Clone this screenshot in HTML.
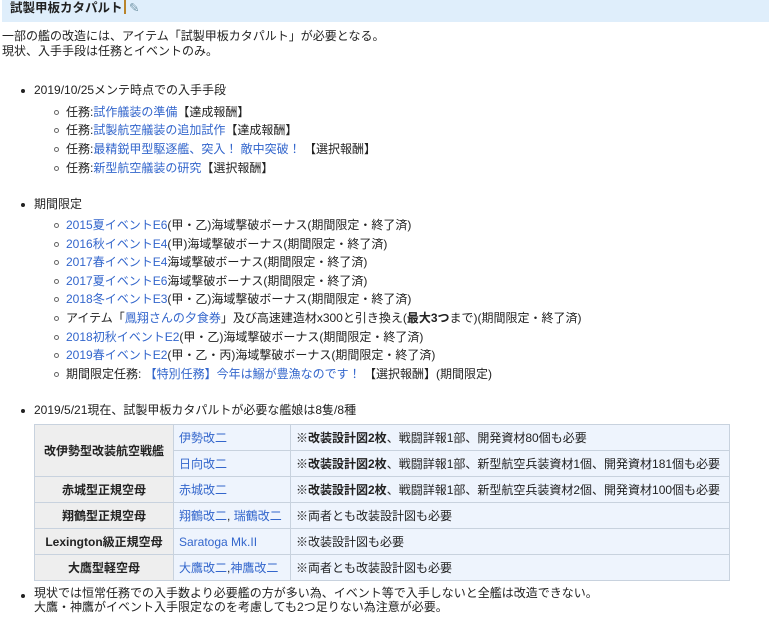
<!DOCTYPE html>
<html><head><meta charset="utf-8"><style>
body{margin:0;width:769px;height:617px;overflow:hidden;background:#fff;font-family:"Liberation Sans","Noto Sans CJK JP",sans-serif;font-size:12px;color:#222;}
.h{position:absolute;left:2px;top:0;width:767px;height:22px;background:#dfeefb;font-weight:bold;font-size:12.5px;line-height:16px;padding-left:8px;box-sizing:border-box;}
.h .bar{display:inline-block;width:2px;height:14px;background:#b8842c;vertical-align:-2px;margin-left:1px}
a{color:#3366cc;text-decoration:none}
.p{position:absolute;left:2px;top:29px;line-height:15px}
.l1{position:absolute;left:34px;line-height:18.7px}
.l1:before{content:"";position:absolute;left:-13px;top:8px;width:4px;height:4px;border-radius:50%;background:#222}
.l2{position:absolute;left:66px;line-height:18.7px}
.l2:before{content:"";position:absolute;left:-12px;top:7px;width:3px;height:3px;border-radius:50%;border:1px solid #666}
table{position:absolute;left:34px;top:424px;border-collapse:collapse;width:696px}
td{border:1px solid #c8d2de;height:25px;padding:0 5px;line-height:14px}
td.t{background:#eee;font-weight:bold;text-align:center;width:128px}
td.n{background:#eef4fd;width:106px}
td.d{background:#eef4fd}
b{font-weight:bold}
</style></head><body>
<div class="h">試製甲板カタパルト<span class="bar"></span> <span style="color:#79a;font-weight:normal">✎</span></div>
<div class="p">一部の艦の改造には、アイテム「試製甲板カタパルト」が必要となる。<br>現状、入手手段は任務とイベントのみ。</div>

<div class="l1" style="top:81px">2019/10/25メンテ時点での入手手段</div>
<div class="l2" style="top:103px">任務:<a>試作艤装の準備</a>【達成報酬】</div>
<div class="l2" style="top:121px">任務:<a>試製航空艤装の追加試作</a>【達成報酬】</div>
<div class="l2" style="top:140px">任務:<a>最精鋭甲型駆逐艦、突入！ 敵中突破！</a> 【選択報酬】</div>
<div class="l2" style="top:159px">任務:<a>新型航空艤装の研究</a>【選択報酬】</div>

<div class="l1" style="top:195px">期間限定</div>
<div class="l2" style="top:216px"><a>2015夏イベントE6</a>(甲・乙)海域撃破ボーナス(期間限定・終了済)</div>
<div class="l2" style="top:235px"><a>2016秋イベントE4</a>(甲)海域撃破ボーナス(期間限定・終了済)</div>
<div class="l2" style="top:253px"><a>2017春イベントE4</a>海域撃破ボーナス(期間限定・終了済)</div>
<div class="l2" style="top:272px"><a>2017夏イベントE6</a>海域撃破ボーナス(期間限定・終了済)</div>
<div class="l2" style="top:290px"><a>2018冬イベントE3</a>(甲・乙)海域撃破ボーナス(期間限定・終了済)</div>
<div class="l2" style="top:309px">アイテム「<a>鳳翔さんの夕食券</a>」及び高速建造材x300と引き換え(<b>最大3つ</b>まで)(期間限定・終了済)</div>
<div class="l2" style="top:328px"><a>2018初秋イベントE2</a>(甲・乙)海域撃破ボーナス(期間限定・終了済)</div>
<div class="l2" style="top:346px"><a>2019春イベントE2</a>(甲・乙・丙)海域撃破ボーナス(期間限定・終了済)</div>
<div class="l2" style="top:365px">期間限定任務: <a>【特別任務】今年は鰯が豊漁なのです！</a> 【選択報酬】(期間限定)</div>

<div class="l1" style="top:401px">2019/5/21現在、試製甲板カタパルトが必要な艦娘は8隻/8種</div>
<table>
<tr><td class="t" rowspan="2">改伊勢型改装航空戦艦</td><td class="n"><a>伊勢改二</a></td><td class="d"><b>※改装設計図2枚</b>、戦闘詳報1部、開発資材80個も必要</td></tr>
<tr><td class="n"><a>日向改二</a></td><td class="d"><b>※改装設計図2枚</b>、戦闘詳報1部、新型航空兵装資材1個、開発資材181個も必要</td></tr>
<tr><td class="t">赤城型正規空母</td><td class="n"><a>赤城改二</a></td><td class="d"><b>※改装設計図2枚</b>、戦闘詳報1部、新型航空兵装資材2個、開発資材100個も必要</td></tr>
<tr><td class="t">翔鶴型正規空母</td><td class="n"><a>翔鶴改二</a>, <a>瑞鶴改二</a></td><td class="d">※両者とも改装設計図も必要</td></tr>
<tr><td class="t">Lexington級正規空母</td><td class="n"><a>Saratoga Mk.II</a></td><td class="d">※改装設計図も必要</td></tr>
<tr><td class="t">大鷹型軽空母</td><td class="n"><a>大鷹改二</a>,<a>神鷹改二</a></td><td class="d">※両者とも改装設計図も必要</td></tr>
</table>
<div class="l1" style="top:586px;line-height:14px">現状では恒常任務での入手数より必要艦の方が多い為、イベント等で入手しないと全艦は改造できない。<br>大鷹・神鷹がイベント入手限定なのを考慮しても2つ足りない為注意が必要。</div>
</body></html>
